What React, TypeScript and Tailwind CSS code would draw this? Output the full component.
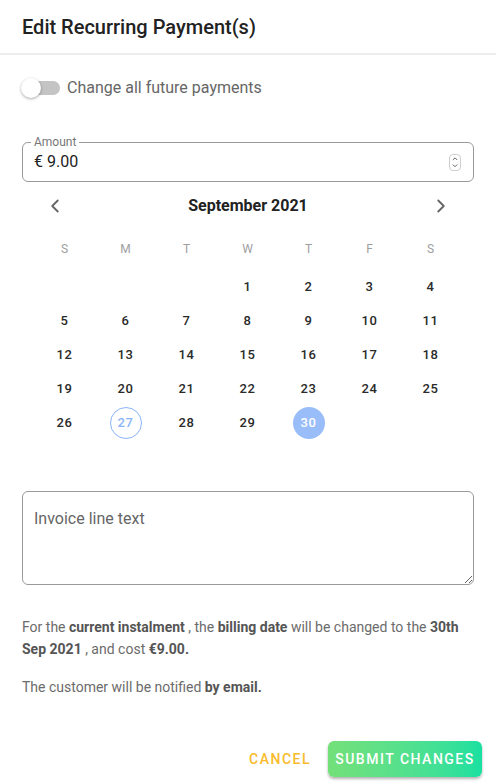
import { ChevronLeft, ChevronRight, ChevronUp, ChevronDown } from "lucide-react";

const weekDays = ["S", "M", "T", "W", "T", "F", "S"];

// September 2021 starts on a Wednesday
const buildDays = () => {
    const cells: (number | null)[] = [null, null, null];
    for (let d = 1; d <= 30; d++) cells.push(d);
    return cells;
};

const DayCell = ({ day }: { day: number | null }) => {
    if (day === null) return <div className="h-[34px]" />;

    if (day === 30) {
        return (
            <div className="h-[34px] flex items-center justify-center">
                <span className="w-[32px] h-[32px] rounded-full bg-[#99bdf8] text-white flex items-center justify-center text-[13px] font-medium tracking-[0.6px]">
                    {day}
                </span>
            </div>
        );
    }

    if (day === 27) {
        return (
            <div className="h-[34px] flex items-center justify-center">
                <span className="w-[32px] h-[32px] rounded-full border border-[#8ab4f8] text-[#8ab4f8] flex items-center justify-center text-[13px] font-medium tracking-[0.6px]">
                    {day}
                </span>
            </div>
        );
    }

    return (
        <div className="h-[34px] flex items-center justify-center text-[13px] font-medium text-[#2a2a2a] tracking-[0.6px]">
            {day}
        </div>
    );
};

export default function App() {
    const days = buildDays();

    return (
        <div className="w-[496px] h-[782px] bg-white font-['Roboto',sans-serif] flex flex-col">
            {/* Header */}
            <div className="h-[55px] px-[22px] flex items-center border-b-2 border-[#ececec]">
                <h1 className="text-[20px] font-medium text-[#222]">Edit Recurring Payment(s)</h1>
            </div>

            <div className="px-[22px] flex flex-col">
                {/* Switch */}
                <div className="mt-[21px] h-[24px] flex items-center gap-[7px]">
                    <div className="relative w-[38px] h-[14px] rounded-full bg-[#c4c4c4]">
                        <span className="absolute left-[-1px] top-[-3px] w-[20px] h-[20px] rounded-full bg-white shadow-[0_1px_3px_rgba(0,0,0,0.35)]" />
                    </div>
                    <span className="text-[16px] text-[#666]">Change all future payments</span>
                </div>

                {/* Amount */}
                <div className="relative mt-[42px] h-[40px] rounded-[6px] border border-[#9a9a9a] flex items-center pl-[11px] pr-[12px]">
                    <span className="absolute left-[8px] top-[-9px] px-[3px] bg-white text-[12px] leading-[16px] text-[#777]">
                        Amount
                    </span>
                    <span className="flex-1 text-[16px] text-[#222]">€ 9.00</span>
                    <div className="w-[12px] h-[17px] rounded-[4px] border border-[#cfcfcf] flex flex-col items-center justify-center text-[#555]">
                        <ChevronUp size={8} strokeWidth={3} />
                        <ChevronDown size={8} strokeWidth={3} />
                    </div>
                </div>

                {/* Calendar header */}
                <div className="mt-[4px] h-[40px] flex items-center justify-between pl-[22px] pr-[22px]">
                    <ChevronLeft size={22} strokeWidth={2} className="text-[#666]" />
                    <span className="text-[16px] font-bold text-[#222]">September 2021</span>
                    <ChevronRight size={22} strokeWidth={2} className="text-[#666]" />
                </div>

                {/* Calendar grid */}
                <div className="ml-[12px] w-[427px] mt-[6px]">
                    <div className="grid grid-cols-7 h-[34px] items-center">
                        {weekDays.map((d, i) => (
                            <div key={i} className="text-center text-[12px] text-[#9e9e9e]">
                                {d}
                            </div>
                        ))}
                    </div>
                    <div className="grid grid-cols-7 mt-[4px]">
                        {days.map((d, i) => (
                            <DayCell key={i} day={d} />
                        ))}
                    </div>
                </div>

                {/* Invoice text */}
                <textarea
                    placeholder="Invoice line text"
                    className="mt-[51px] h-[94px] rounded-[6px] border border-[#9a9a9a] pt-[15px] pl-[11px] text-[16px] leading-[24px] text-[#222] placeholder:text-[#666] outline-none"
                />

                {/* Info */}
                <p className="mt-[31px] text-[14px] leading-[22px] text-[#6b6b6b]">
                    For the <b className="font-bold text-[#555]">current instalment</b> , the{" "}
                    <b className="font-bold text-[#555]">billing date</b> will be changed to the{" "}
                    <b className="font-bold text-[#555]">30th Sep 2021</b> , and cost{" "}
                    <b className="font-bold text-[#555]">€9.00.</b>
                </p>
                <p className="mt-[16px] text-[14px] leading-[22px] text-[#6b6b6b]">
                    The customer will be notified <b className="font-bold text-[#555]">by email.</b>
                </p>

                {/* Actions */}
                <div className="mt-[43px] flex items-center justify-end gap-[17px] mr-[-8px]">
                    <button className="text-[14px] font-medium tracking-[1.5px] text-[#f8bb2b]">CANCEL</button>
                    <button className="h-[36px] w-[154px] rounded-[6px] bg-gradient-to-r from-[#73e079] to-[#17e0a0] text-white text-[14px] font-medium tracking-[1.5px] shadow-[0_2px_3px_rgba(0,0,0,0.3)]">
                        SUBMIT CHANGES
                    </button>
                </div>
            </div>
        </div>
    );
}
